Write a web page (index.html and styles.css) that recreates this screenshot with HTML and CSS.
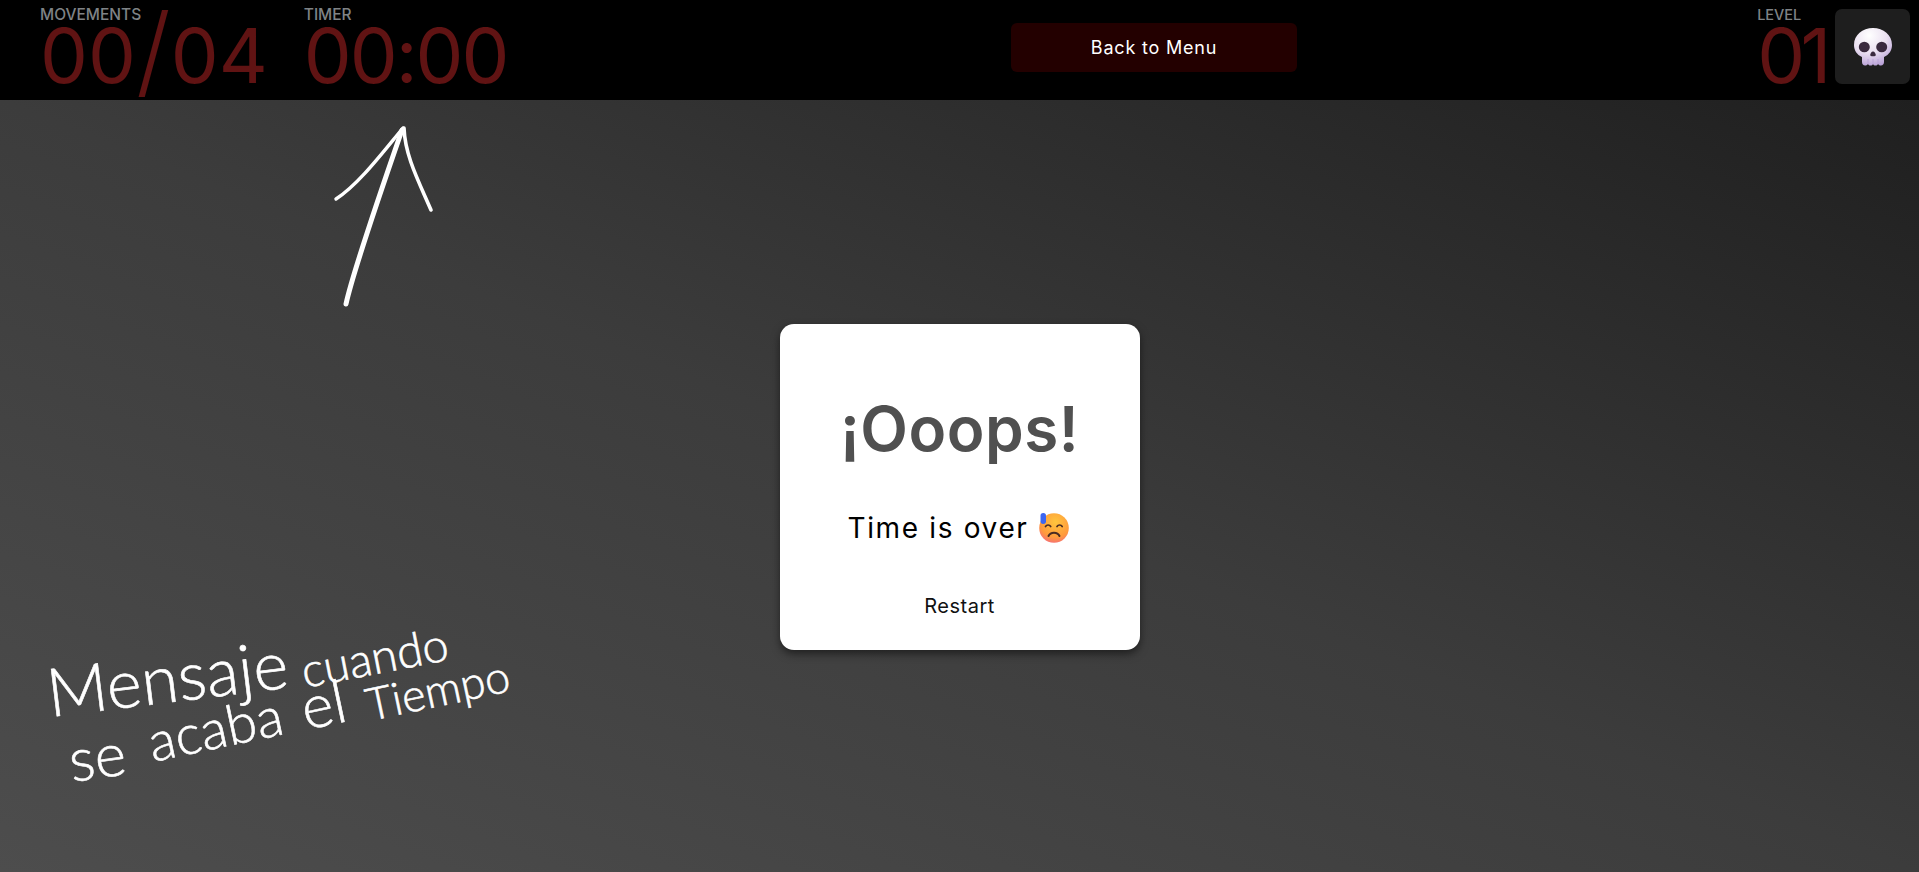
FILE: index.html
```html
<!DOCTYPE html>
<html lang="en">
<head>
<meta charset="utf-8">
<title>Time is over</title>
<link rel="stylesheet" href="styles.css">
</head>
<body>
<header class="topbar">
  <div class="stats">
    <div class="stat stat-moves">
      <span class="stat-label">MOVEMENTS</span>
      <span class="stat-value">00<span class="slash">/</span>04</span>
    </div>
    <div class="stat stat-timer">
      <span class="stat-label">TIMER</span>
      <span class="stat-value">00:00</span>
    </div>
  </div>
  <button class="menu-btn">Back to Menu</button>
  <div class="right">
    <div class="stat stat-level">
      <span class="stat-label">LEVEL</span>
      <span class="stat-value">01</span>
    </div>
    <div class="skull-box">
      <svg class="skull" viewBox="0 0 38 38" aria-hidden="true">
        <defs>
          <radialGradient id="bone" cx="40%" cy="20%" r="85%">
            <stop offset="0" stop-color="#ffffff"/>
            <stop offset="0.55" stop-color="#eadff0"/>
            <stop offset="1" stop-color="#b79fd6"/>
          </radialGradient>
        </defs>
        <path fill="url(#bone)" d="M19 0C8.500 0 0 6.800 0 17c0 5.500 2.800 9.600 8 12v5c0 2 1.300 3.500 3 3.500s2.500-.8 3-1.600c.6 1 1.300 1.600 2.500 1.600 1.300 0 2-.5 2.500-1.600.5 1.100 1.200 1.600 2.500 1.600 1.200 0 1.900-.6 2.500-1.600.5.8 1.300 1.600 3 1.600s3-1.500 3-3.500v-5c5.200-2.400 8-6.500 8-12C38 6.800 29.500 0 19 0z"/>
        <ellipse cx="10.300" cy="19" rx="5.500" ry="5.300" fill="#3a2a3e"/>
        <ellipse cx="27.700" cy="19" rx="5.500" ry="5.300" fill="#3a2a3e"/>
        <path fill="#3a2a3e" d="M19 23.500c1.500 0 2.800 2.200 2.800 3.500 0 1-.9 1.300-2.800 1.300s-2.800-.3-2.800-1.300c0-1.300 1.300-3.500 2.800-3.500z"/>
        <path stroke="#b79fd6" stroke-width=".8" fill="none" d="M14 31v5M19 31v5M24 31v5"/>
      </svg>
    </div>
  </div>
</header>

<main class="stage">
  <svg class="arrow" viewBox="0 0 110 190" aria-hidden="true">
    <g fill="none" stroke="#fff" stroke-linecap="round">
      <path stroke-width="5" d="M13 182C20 150 44 80 69 8"/>
      <path stroke-width="3.400" d="M70 6C50 30 26 62 3 77"/>
      <path stroke-width="3.600" d="M71 6C72 34 86 60 98 88"/>
    </g>
  </svg>

  <div class="note">
    <span class="word word-mensaje">Mensaje</span>
    <span class="word word-cuando">cuando</span>
    <span class="word word-se">se</span>
    <span class="word word-acaba">acaba</span>
    <span class="word word-el">el</span>
    <span class="word word-tiempo">Tiempo</span>
  </div>

  <section class="card">
    <h1 class="card-title">¡Ooops!</h1>
    <p class="card-text">Time is over
      <svg class="face" viewBox="0 0 30 30" aria-hidden="true">
        <defs>
          <radialGradient id="skin" cx="55%" cy="30%" r="80%">
            <stop offset="0" stop-color="#ffc53d"/>
            <stop offset="0.65" stop-color="#ff9a3c"/>
            <stop offset="1" stop-color="#f2608a"/>
          </radialGradient>
        </defs>
        <circle cx="15" cy="15" r="14.800" fill="url(#skin)"/>
        <rect x="1.500" y="0" width="5.500" height="11" rx="2.700" fill="#3d66f0"/>
        <g fill="none" stroke="#4a2c22" stroke-width="1.700" stroke-linecap="round">
          <path d="M6.500 13.500c1.200-2 4-2 5.200 0"/>
          <path d="M18 13.500c1.200-2 4-2 5.200 0"/>
          <path d="M9.500 23c2-4.500 9-4.500 11 0" stroke-width="2"/>
        </g>
      </svg>
    </p>
    <button class="restart">Restart</button>
  </section>
</main>
</body>
</html>
```

FILE: styles.css
```css
* { box-sizing: border-box; }

html, body {
  margin: 0;
  height: 100%;
}

body {
  display: flex;
  flex-direction: column;
  overflow: hidden;
  font-family: "Inter", "Noto Sans", sans-serif;
  background: #333;
}

.topbar {
  flex: 0 0 100px;
  display: flex;
  align-items: flex-start;
  background: #000;
  padding: 0 9px 0 40px;
}

.stats {
  display: flex;
  gap: 36px;
  width: 971px;
}

.stat {
  display: flex;
  flex-direction: column;
  padding-top: 7px;
}

.stat-label {
  font-size: 15.5px;
  line-height: 15px;
  font-weight: 500;
  color: #7f8386;
}

.stat-value {
  font-size: 76px;
  line-height: 66px;
  font-weight: 400;
  color: #601313;
  white-space: nowrap;
}

.stat-moves .stat-value { letter-spacing: 0; }
.stat-timer .stat-value { letter-spacing: -2px; }
.stat-level .stat-value { letter-spacing: -4.5px; }
.stat-level .stat-label { font-size: 14.5px; }

.slash {
  font-size: 100px;
  font-weight: 300;
  line-height: 0;
  vertical-align: -3px;
}

.menu-btn {
  margin-top: 23px;
  width: 286px;
  height: 49px;
  border: 0;
  border-radius: 6px;
  background: #230000;
  color: #fff;
  font: 400 18px "Inter", sans-serif;
  letter-spacing: 0.8px;
}

.right {
  margin-left: auto;
  display: flex;
  gap: 8px;
}

.skull-box {
  margin-top: 9px;
  width: 75px;
  height: 75px;
  border-radius: 7px;
  background: #1e1e1e;
  display: flex;
  align-items: center;
  justify-content: center;
}

.skull {
  width: 38px;
  height: 38px;
}

.stage {
  position: relative;
  flex: 1;
  display: flex;
  align-items: center;
  justify-content: center;
  background: linear-gradient(to top right, #4d4d4d 0%, #3c3c3c 50%, #1f1f1f 100%);
}

.arrow {
  position: absolute;
  left: 333px;
  top: 22px;
  width: 110px;
  height: 190px;
}

.note {
  position: absolute;
  inset: 0;
  pointer-events: none;
  color: #fff;
  font-family: "Lato", sans-serif;
  font-weight: 300;
  -webkit-text-stroke: 0.6px #fff;
}

.word {
  position: absolute;
  line-height: 1;
  white-space: nowrap;
  transform-origin: 0 0.887em;
}

.word-mensaje { left: 50px; top: 558px; font-size: 67px; transform: rotate(-7deg); }
.word-cuando { left: 305px; top: 547px; font-size: 47px; transform: rotate(-11deg); }
.word-se { left: 72px; top: 629px; font-size: 60px; transform: rotate(-8deg); }
.word-acaba { left: 153px; top: 614px; font-size: 55px; transform: rotate(-12deg); }
.word-el { left: 306px; top: 577px; font-size: 60px; transform: rotate(-12deg); }
.word-tiempo { left: 370px; top: 582px; font-size: 45px; transform: rotate(-12deg); }

.card {
  width: 360px;
  height: 326px;
  margin-top: 2px;
  background: #fff;
  border-radius: 14px;
  box-shadow: 0 4px 8px rgba(0, 0, 0, 0.5);
  display: flex;
  flex-direction: column;
  align-items: center;
}

.card-title {
  margin: 69px 0 0;
  font-size: 62px;
  line-height: 72px;
  font-weight: 600;
  letter-spacing: 0.5px;
  color: #505050;
}

.card-text {
  margin: 45px 0 0;
  padding-right: 3px;
  display: flex;
  align-items: center;
  gap: 10px;
  font-size: 28px;
  line-height: 36px;
  letter-spacing: 1.65px;
  color: #000;
}

.face {
  width: 30px;
  height: 30px;
}

.restart {
  margin-top: 47px;
  border: 0;
  background: none;
  font: 400 20px "Inter", sans-serif;
  letter-spacing: 0.5px;
  color: #111;
}
```
